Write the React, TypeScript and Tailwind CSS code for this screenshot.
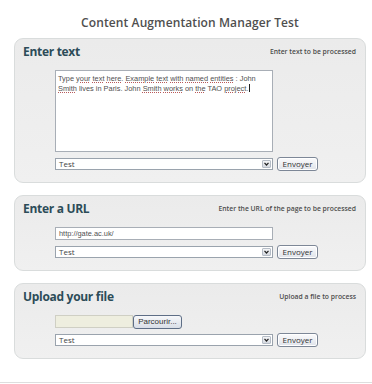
import React from "react";

const U = ({ children }: { children: React.ReactNode }) => (
  <span className="underline decoration-dotted decoration-[#b85a5a] underline-offset-[1px]">{children}</span>
);

const SelectBox = () => (
  <div className="flex h-[12px] w-[218px] items-stretch border border-[#9aa3ad] bg-white">
    <div className="flex-1 pl-[3px] text-[8px] leading-[10px] text-[#444]">Test</div>
    <div className="m-[1px] flex w-[9px] items-center justify-center rounded-[1px] border border-[#b5bcc6] bg-gradient-to-b from-[#f4f5f7] to-[#d5d9e0]">
      <svg width="5" height="4" viewBox="0 0 5 4">
        <path d="M0.5 0.8 L2.5 3 L4.5 0.8" fill="none" stroke="#222" strokeWidth="1.2" />
      </svg>
    </div>
  </div>
);

const Btn = ({ label, w }: { label: string; w: string }) => (
  <div
    className={`${w} flex h-[14px] items-center justify-center rounded-[3px] border border-[#7d8797] bg-gradient-to-b from-[#fbfbfc] to-[#dfe3ea] text-[8px] leading-none text-[#333] shadow-[inset_0_0_0_1px_#ffffff]`}
  >
    {label}
  </div>
);

const SelectRow = () => (
  <div className="mt-[5px] flex h-[14px] items-center gap-[4px]">
    <SelectBox />
    <Btn label="Envoyer" w="w-[41px]" />
  </div>
);

const Panel = ({
  title,
  hint,
  children,
}: {
  title: string;
  hint: string;
  children: React.ReactNode;
}) => (
  <div className="rounded-[9px] border border-[#d9dcdc] bg-gradient-to-b from-[#ebebeb] to-[#f0f0f0] pt-[5px] pb-[11px]">
    <div className="flex h-[16px] items-center justify-between pl-[8px] pr-[9px]">
      <div className="text-[12px] font-bold leading-[16px] tracking-[-0.3px] text-[#2c4c58]">{title}</div>
      <div className="text-[6.8px] font-semibold leading-none text-[#4c4c4c]">{hint}</div>
    </div>
    <div className="mt-[10px] pl-[40px]">{children}</div>
  </div>
);

export default function App() {
  return (
    <div
      className="min-h-[384px] w-[372px] bg-white pt-[15px]"
      style={{ fontFamily: '"Open Sans", "DejaVu Sans", sans-serif' }}
    >
      <div className="h-[16px] pl-[14px] pr-[6px] text-center text-[12px] font-semibold leading-[16px] tracking-[0.1px] text-[#4f4f4f]">
        Content Augmentation Manager Test
      </div>
      <div className="mt-[7px] flex flex-col gap-[12px] pl-[14px] pr-[6px]">
        <Panel title="Enter text" hint="Enter text to be processed">
          <div
            className="h-[82px] w-[218px] border border-[#a8aeb6] bg-white px-[2px] pt-[3px] text-[7.4px] leading-[9px] text-[#505050]"
            style={{ fontFamily: '"Liberation Sans", Arial, sans-serif' }}
          >
            Type <U>your</U> <U>text</U> <U>here</U>. <U>Example</U> <U>text</U> <U>with</U> <U>named</U>{" "}
            <U>entities</U> : John <U>Smith</U> lives in Paris. John <U>Smith</U> <U>works</U> on <U>the</U> TAO{" "}
            <U>project</U>.<span className="ml-[1px] inline-block h-[8px] w-px translate-y-[1px] bg-[#222]" />
          </div>
          <SelectRow />
        </Panel>
        <Panel title="Enter a URL" hint="Enter the URL of the page to be processed">
          <div
            className="flex h-[13px] w-[218px] items-center border border-[#a8aeb6] bg-white pl-[3px] text-[7.4px] text-[#505050]"
            style={{ fontFamily: '"Liberation Sans", Arial, sans-serif' }}
          >
            http://gate.ac.uk/
          </div>
          <SelectRow />
        </Panel>
        <Panel title="Upload your file" hint="Upload a file to process">
          <div className="flex h-[13px] items-center">
            <div className="h-[13px] w-[78px] border border-[#cfcfc4] bg-[#eeeedf]" />
            <div
              className="flex h-[14px] w-[49px] items-center justify-center rounded-[3px] border border-[#5e6e86] bg-gradient-to-b from-[#f7f8fa] to-[#d9dee7] text-[8px] leading-none text-[#333]"
              style={{ fontFamily: '"Liberation Sans", Arial, sans-serif' }}
            >
              Parcourir...
            </div>
          </div>
          <SelectRow />
        </Panel>
      </div>
      <div className="mt-[23px] h-px w-full bg-[#dedede]" />
    </div>
  );
}
